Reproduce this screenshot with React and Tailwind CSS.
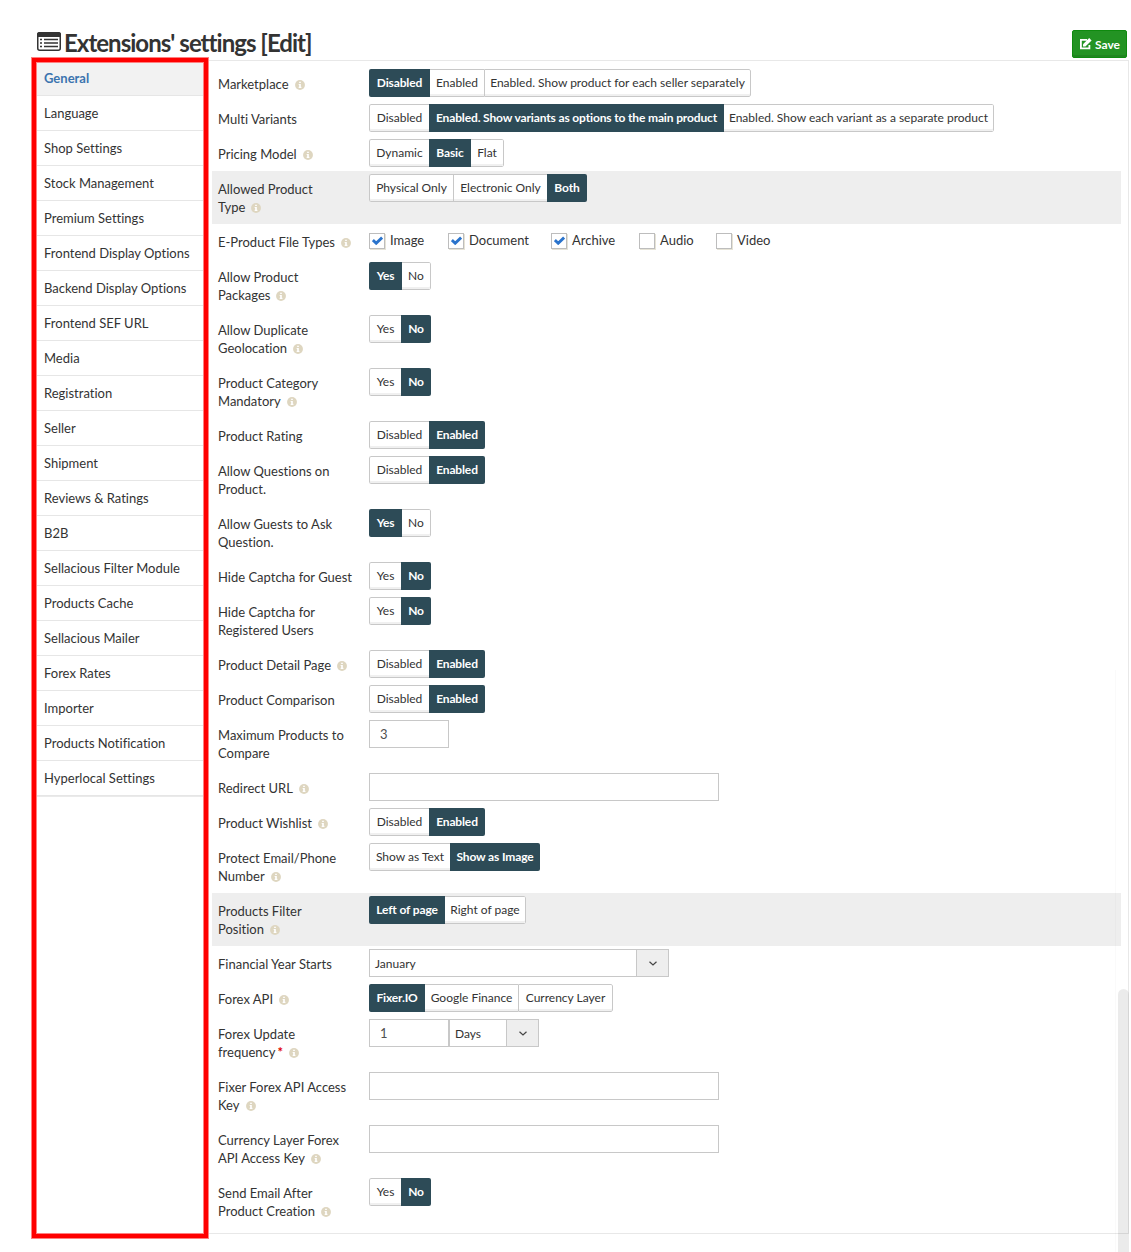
import React from "react";

const NAV = [
  "General", "Language", "Shop Settings", "Stock Management", "Premium Settings",
  "Frontend Display Options", "Backend Display Options", "Frontend SEF URL", "Media",
  "Registration", "Seller", "Shipment", "Reviews & Ratings", "B2B",
  "Sellacious Filter Module", "Products Cache", "Sellacious Mailer", "Forex Rates",
  "Importer", "Products Notification", "Hyperlocal Settings",
];

function Info() {
  return (
    <svg className="ml-[6px] inline-block h-[10px] w-[10px] align-[-1px]" viewBox="0 0 12 12">
      <circle cx="6" cy="6" r="5.9" fill="#ded6c0" />
      <path d="M5 2h2v1.7H5zM4.4 4.8H7v3.4h.7v1.3H4.4V8.2H5V6.1h-.6z" fill="#fff" />
    </svg>
  );
}

function Row({ lines, info, required, shaded, children }) {
  return (
    <div className={`flex pl-[6px] ${lines.length > 1 ? "h-[53px]" : "h-[35px]"} ${shaded ? "bg-[#eeeeee]" : ""}`}>
      <div className="w-[151px] shrink-0 pt-[9px] text-[13px] leading-[18px] whitespace-nowrap text-[#333]">
        {lines.map((line, i) => (
          <div key={line} className="h-[18px]">
            {line}
            {required && i === lines.length - 1 && <span className="ml-[2px] font-bold text-[#e00000]">*</span>}
            {info && i === lines.length - 1 && <Info />}
          </div>
        ))}
      </div>
      <div className="flex items-start pt-[3px]">{children}</div>
    </div>
  );
}

/* options: [label, width in px]; active: index of the pressed option */
function Group({ options, active }) {
  return (
    <div className="flex h-7 overflow-hidden rounded-[2px]">
      {options.map(([label, width], i) => {
        const on = i === active;
        const last = i === options.length - 1;
        const edges = on
          ? "bg-[#2d4b57] font-bold tracking-[-0.14px] text-white"
          : `border-y border-[#c8c8c8] bg-white text-[#333] shadow-[inset_0_-2px_0_#f0f0f0] ${
              i === 0 ? "rounded-l-[2px] border-l" : i - 1 !== active ? "border-l" : ""
            } ${last ? "rounded-r-[2px] border-r" : ""}`;
        return (
          <div
            key={label}
            style={{ width }}
            className={`flex shrink-0 items-center justify-center pb-px text-[12px] leading-none whitespace-nowrap ${edges}`}
          >
            {label}
          </div>
        );
      })}
    </div>
  );
}

const YesNo = ({ yes }) => (
  <Group options={yes ? [["Yes", 33], ["No", 29]] : [["Yes", 32], ["No", 30]]} active={yes ? 0 : 1} />
);
const OnOff = () => <Group options={[["Disabled", 60], ["Enabled", 56]]} active={1} />;

function Check({ label, checked, className }) {
  return (
    <div className={`flex shrink-0 pt-[6px] ${className}`}>
      <div className="flex h-4 w-4 items-center justify-center border border-[#bdbdbd] bg-white shadow-[1px_1px_0_#e6e3d6]">
        {checked && (
          <svg className="mb-px h-[9px] w-[11px]" viewBox="0 0 11 9">
            <path d="M.9 4.1 4.2 7.2 10.1 1.5" fill="none" stroke="#2b74cc" strokeWidth="2.9" />
          </svg>
        )}
      </div>
      <span className="-mt-px ml-[5px] text-[13px] leading-4 text-[#333]">{label}</span>
    </div>
  );
}

const Input = ({ wide, value }) => (
  <div className={`flex h-7 items-center border border-[#c8c8c8] bg-white pl-[10px] text-[13px] leading-none text-[#505050] ${wide ? "w-[350px]" : "w-20"}`}>
    {value}
  </div>
);

function Select({ value, className }) {
  return (
    <div className={`flex h-7 border border-[#c8c8c8] bg-white ${className}`}>
      <div className="flex flex-1 items-center pt-px pl-[5px] text-[12px] text-[#333]">{value}</div>
      <div className="flex w-8 items-center justify-center border-l border-[#c8c8c8] bg-[#eeeeee]">
        <svg className="h-[5px] w-2" viewBox="0 0 8 5">
          <path d="M.5.7 4 4 7.5.7" fill="none" stroke="#444" strokeWidth="1.2" />
        </svg>
      </div>
    </div>
  );
}

export default function App() {
  return (
    <div className="relative h-[1252px] w-[1131px] overflow-hidden bg-white font-['Lato',sans-serif] [font-variant-ligatures:none]">
      <header className="flex h-[60px] items-start pr-[4px] pl-[37px]">
        <svg className="mt-8 h-[19px] w-6 shrink-0" viewBox="0 0 24 19">
          <rect x=".75" y=".75" width="22.5" height="17.5" rx="2" fill="#fff" stroke="#333" strokeWidth="1.5" />
          <path d="M0 2.5A2.5 2.5 0 0 1 2.5 0h19A2.5 2.5 0 0 1 24 2.5V5H0z" fill="#333" />
          <path d="M7 7.5h14M7 11h14M7 14.5h14M3 7.5h2M3 11h2M3 14.5h2" stroke="#333" strokeWidth="1.5" />
        </svg>
        <h1 className="mt-[27px] ml-[3px] flex-1 text-[24px] leading-8 font-bold tracking-[-0.97px] whitespace-nowrap text-[#333]">
          Extensions' settings [Edit]
        </h1>
        <button className="mt-[30px] flex h-7 w-[55px] items-center justify-center gap-[3px] rounded-[2px] border border-[#0f8a0f] bg-[#239323] text-[12px] font-bold text-white shadow-[inset_0_-2px_0_#1f861f]">
          <svg className="h-3 w-[13px]" viewBox="0 0 13 12">
            <path d="M8 1.8H1.9v8.5h8.5V7" fill="none" stroke="#fff" strokeWidth="1.8" />
            <path d="M4 8.6V6.2L10.2 0l2.4 2.4-6.2 6.2z" fill="#fff" />
          </svg>
          <span className="pt-px">Save</span>
        </button>
      </header>

      <main className="ml-[36px] flex h-[1174px] w-[1093px] border-t border-r border-b border-[#e8e8e8]">
        <nav className="w-[168px] shrink-0">
          {NAV.map((item, i) => (
            <div
              key={item}
              className={`flex h-[35px] items-center border-b border-[#e6e6e6] pt-[2px] pl-2 text-[13px] whitespace-nowrap ${
                i === 0 ? "bg-[#f2f2f2] font-bold text-[#3b74af]" : "bg-white text-[#333]"
              } ${i === NAV.length - 1 ? "shadow-[0_1px_0_#eaeaea]" : ""}`}
            >
              {item}
            </div>
          ))}
        </nav>

        <section className="ml-2 w-[909px] pt-[5px]">
          <Row lines={["Marketplace"]} info>
            <Group options={[["Disabled", 61], ["Enabled", 54], ["Enabled. Show product for each seller separately", 267]]} active={0} />
          </Row>
          <Row lines={["Multi Variants"]}>
            <Group
              options={[["Disabled", 60], ["Enabled. Show variants as options to the main product", 295], ["Enabled. Show each variant as a separate product", 270]]}
              active={1}
            />
          </Row>
          <Row lines={["Pricing Model"]} info>
            <Group options={[["Dynamic", 60], ["Basic", 42], ["Flat", 33]]} active={1} />
          </Row>
          <Row lines={["Allowed Product", "Type"]} info shaded>
            <Group options={[["Physical Only", 84], ["Electronic Only", 94], ["Both", 40]]} active={2} />
          </Row>
          <Row lines={["E-Product File Types"]} info>
            <Check label="Image" checked className="w-[79px]" />
            <Check label="Document" checked className="w-[103px]" />
            <Check label="Archive" checked className="w-[88px]" />
            <Check label="Audio" className="w-[77px]" />
            <Check label="Video" className="w-[77px]" />
          </Row>
          <Row lines={["Allow Product", "Packages"]} info><YesNo yes /></Row>
          <Row lines={["Allow Duplicate", "Geolocation"]} info><YesNo /></Row>
          <Row lines={["Product Category", "Mandatory"]} info><YesNo /></Row>
          <Row lines={["Product Rating"]}><OnOff /></Row>
          <Row lines={["Allow Questions on", "Product."]}><OnOff /></Row>
          <Row lines={["Allow Guests to Ask", "Question."]}><YesNo yes /></Row>
          <Row lines={["Hide Captcha for Guest"]}><YesNo /></Row>
          <Row lines={["Hide Captcha for", "Registered Users"]}><YesNo /></Row>
          <Row lines={["Product Detail Page"]} info><OnOff /></Row>
          <Row lines={["Product Comparison"]}><OnOff /></Row>
          <Row lines={["Maximum Products to", "Compare"]}><Input value="3" /></Row>
          <Row lines={["Redirect URL"]} info><Input wide /></Row>
          <Row lines={["Product Wishlist"]} info><OnOff /></Row>
          <Row lines={["Protect Email/Phone", "Number"]} info>
            <Group options={[["Show as Text", 81], ["Show as Image", 90]]} active={1} />
          </Row>
          <Row lines={["Products Filter", "Position"]} info shaded>
            <Group options={[["Left of page", 76], ["Right of page", 81]]} active={0} />
          </Row>
          <Row lines={["Financial Year Starts"]}><Select value="January" className="w-[300px]" /></Row>
          <Row lines={["Forex API"]} info>
            <Group options={[["Fixer.IO", 56], ["Google Finance", 93], ["Currency Layer", 95]]} active={0} />
          </Row>
          <Row lines={["Forex Update", "frequency"]} required info>
            <Input value="1" />
            <Select value="Days" className="w-[90px]" />
          </Row>
          <Row lines={["Fixer Forex API Access", "Key"]} info><Input wide /></Row>
          <Row lines={["Currency Layer Forex", "API Access Key"]} info><Input wide /></Row>
          <Row lines={["Send Email After", "Product Creation"]} info><YesNo /></Row>
        </section>
      </main>

      <div className="absolute top-[57px] left-[31px] h-[1182px] w-[178px] border border-[#ff8080]">
        <div className="h-full w-full border-4 border-[#ff0000]">
          <div className="h-full w-full border border-[#ff8080]" />
        </div>
      </div>
      <div className="absolute top-[670px] left-[1115px] h-[582px] w-[14px] border-l border-black/[0.02]" />
      <div className="absolute top-[989px] left-[1118px] h-[263px] w-[11px] rounded-t-[6px] bg-black/[0.08]" />
    </div>
  );
}
